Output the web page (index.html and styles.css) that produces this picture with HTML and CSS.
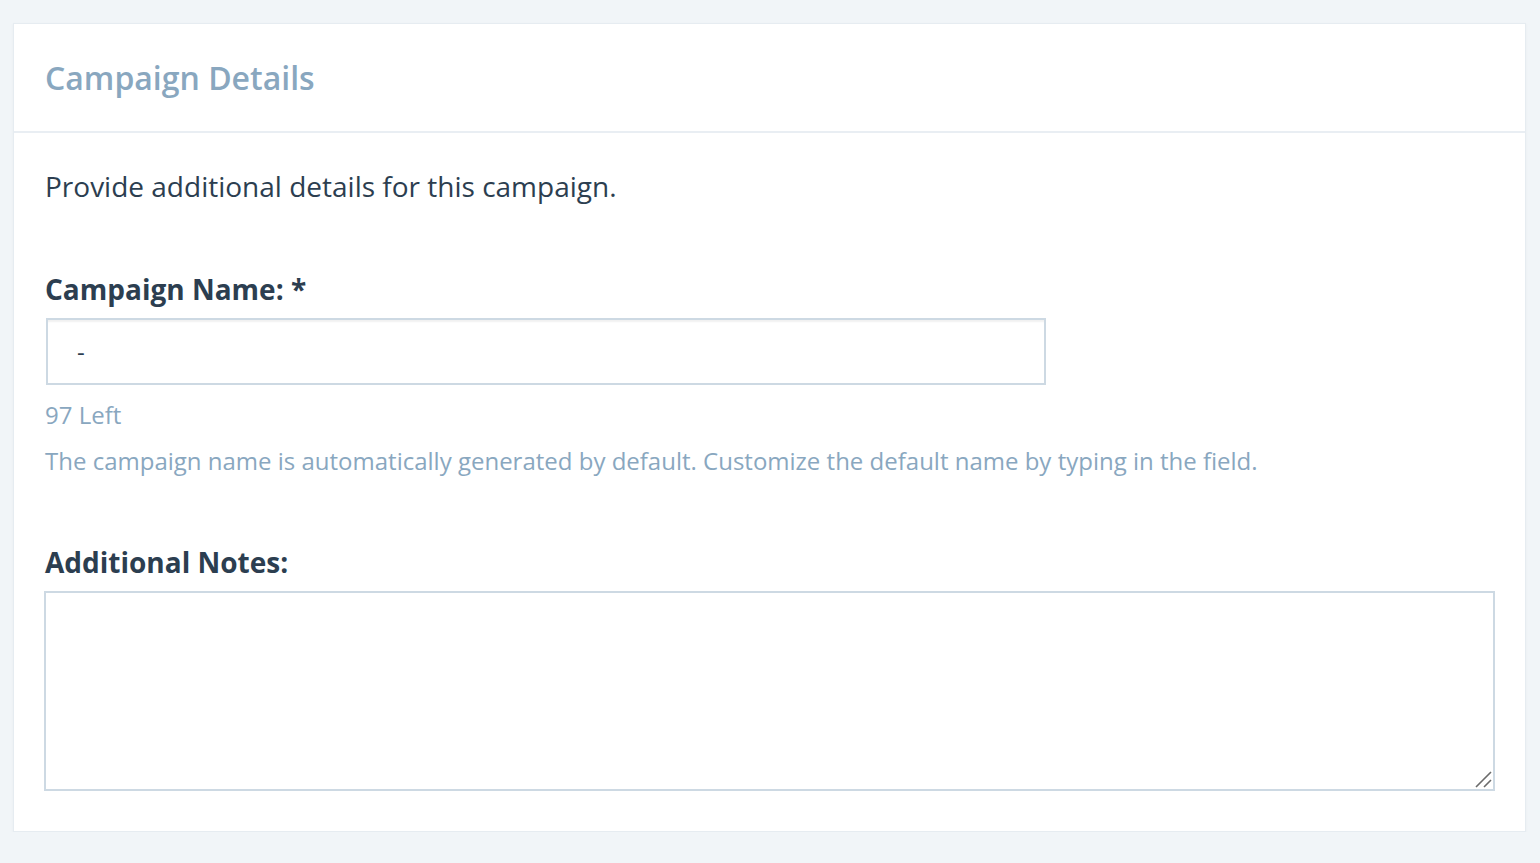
FILE: index.html
```html
<!DOCTYPE html>
<html>
<head>
<meta charset="utf-8">
<link rel="stylesheet" href="styles.css">
</head>
<body>
<div class="page">
  <section class="card">
    <header class="card-header">
      <h2 class="card-title">Campaign Details</h2>
    </header>
    <div class="card-body">
      <p class="intro">Provide additional details for this campaign.</p>
      <div class="field">
        <label class="label">Campaign Name: *</label>
        <input class="input" type="text" value="-">
        <div class="counter">97 Left</div>
        <div class="help">The campaign name is automatically generated by default. Customize the default name by typing in the field.</div>
      </div>
      <div class="field notes">
        <label class="label">Additional Notes:</label>
        <div class="textarea-wrap">
          <textarea class="textarea"></textarea>
          <svg class="grip" width="18" height="18" viewBox="0 0 18 18">
            <path d="M2 17 L17 2 M10 17 L17 10" stroke="#6b6b6b" stroke-width="1.6" fill="none"/>
          </svg>
        </div>
      </div>
    </div>
  </section>
</div>
</body>
</html>
```
FILE: styles.css
```css
* { box-sizing: border-box; }
html, body { margin: 0; padding: 0; }
body {
  background: #f1f5f8;
  font-family: "Open Sans", "Noto Sans", sans-serif;
  color: #2c3e50;
}
.page {
  padding: 23px 14px 0 13px;
}
.card {
  background: #fff;
  border: 1px solid #e6ecf1;
  box-shadow: 0 1px 3px rgba(0,0,0,0.04);
}
.card-header {
  border-bottom: 2px solid #e9eef3;
  padding: 31px 31px 30px;
}
.card-title {
  margin: 0;
  font-size: 32px;
  font-weight: 600;
  line-height: 46px;
  color: #89a7bf;
}
.card-body {
  padding: 33px 30px 40px 31px;
}
.intro {
  margin: 0;
  font-size: 28px;
  line-height: 40px;
  color: #2c3e50;
}
.field { margin-top: 65px; }
.label {
  display: block;
  font-size: 28px;
  font-weight: 700;
  line-height: 36px;
  color: #2c3e50;
  margin-bottom: 11px;
}
.input {
  display: block;
  width: 1000px;
  height: 67px;
  margin-left: 1px;
  border: 2px solid #cdd9e3;
  box-shadow: inset 0 3px 2px -1px rgba(0,0,0,0.06);
  padding: 0 29px;
  font-family: inherit;
  font-size: 24px;
  color: #2c3e50;
  outline: none;
}
.counter {
  margin-top: 14px;
  font-size: 24px;
  line-height: 32px;
  color: #89a7bf;
}
.help {
  margin-top: 14px;
  font-size: 24px;
  line-height: 32px;
  color: #89a7bf;
}
.notes { margin-top: 67px; }
.textarea-wrap {
  position: relative;
  margin: 0 0 0 -1px;
}
.textarea {
  display: block;
  width: 100%;
  height: 200px;
  border: 2px solid #cdd9e3;
  font-family: inherit;
  font-size: 22px;
  resize: none;
  outline: none;
}
.grip {
  position: absolute;
  right: 3px;
  bottom: 3px;
}
```
